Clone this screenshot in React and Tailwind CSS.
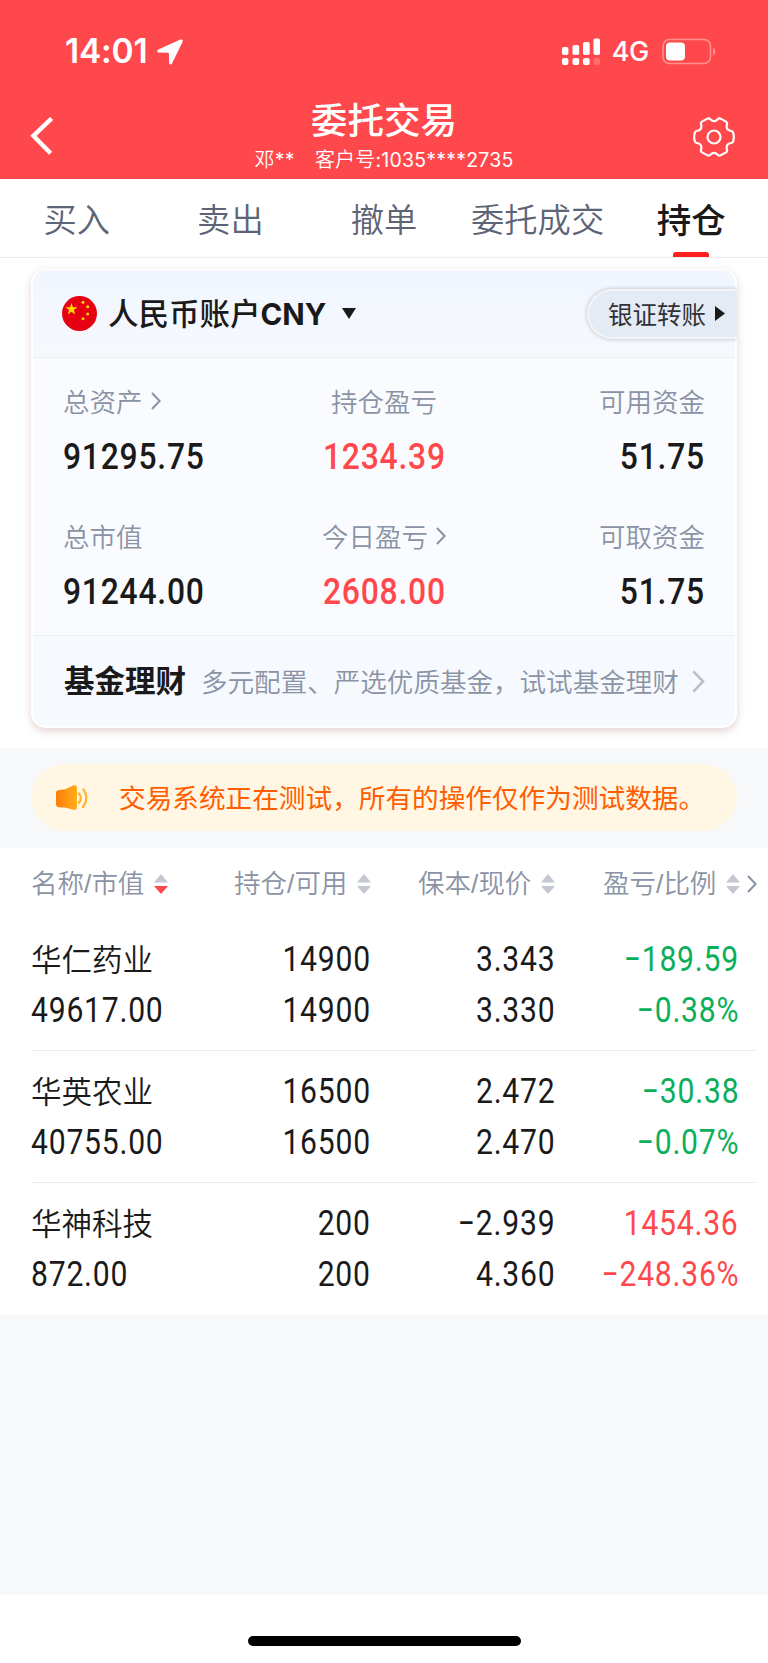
const CJK = "font-['Noto_Sans_CJK_SC',sans-serif]";

function Num({ children, className = "" }) {
  return (
    <span className={"inline-block whitespace-nowrap font-['Roboto',sans-serif] tracking-[0.9px] scale-x-[0.86] " + className}>
      {children}
    </span>
  );
}

function Chevron({ className = "", w = 2 }) {
  return (
    <svg viewBox="0 0 10 18" fill="none" stroke="currentColor" strokeWidth={w} className={className}>
      <path d="M1 1 L8.6 9 L1 17" />
    </svg>
  );
}

function StatusBar() {
  return (
    <div className="flex h-[103px] items-center pl-[65px] pr-[51px] text-white">
      <span className="w-[82px] whitespace-nowrap font-['Inter',sans-serif] text-[33.500px] font-semibold leading-none tracking-[-0.2px]">14:01</span>
      <svg viewBox="0 0 26 26" className="ml-[10px] h-[26px] w-[26px]" fill="currentColor">
        <path d="M23.4.6 1.3 10.6C-.4 11.5 0 13.5 1.8 13.6l9.4.1c.5 0 .7.2.7.7l.1 9.3c.1 2 2.200 2.300 3 .7L25.600 2.700C26.200 1 25 0 23.400.600Z" />
      </svg>
      <svg viewBox="0 0 38 27" className="ml-auto h-[27px] w-[38px]" fill="currentColor">
        <rect x="0" y="9" width="6.400" height="8" rx="1.800" />
        <rect x="10.500" y="7" width="6.700" height="10" rx="1.800" />
        <rect x="21" y="4" width="6.700" height="13" rx="1.800" />
        <rect x="31.500" y="0.500" width="6.500" height="16.500" rx="1.800" />
        <rect x="0" y="20" width="6.400" height="7" rx="2" />
        <rect x="10.500" y="20" width="6.700" height="7" rx="2" />
        <rect x="21" y="20" width="6.700" height="7" rx="2" />
        <rect x="31.500" y="20" width="6.500" height="7" rx="2" opacity="0.200" />
      </svg>
      <span className="ml-[12px] font-['Inter',sans-serif] text-[27px] font-medium leading-none tracking-[-0.3px]">4G</span>
      <svg viewBox="0 0 55 27" className="ml-[13px] h-[27px] w-[55px]">
        <rect x="1" y="1.500" width="47.500" height="24" rx="6.500" fill="none" stroke="#fff" strokeOpacity="0.400" strokeWidth="1.600" />
        <rect x="4" y="4.500" width="19" height="18" rx="4" fill="#fff" />
        <path d="M51 9.500c3 1.500 3 6.500 0 8Z" fill="#fff" opacity="0.400" />
      </svg>
    </div>
  );
}

function NavBar() {
  return (
    <div className="flex h-[76px] items-start justify-between pl-[30px] pr-[33px] text-white">
      <svg viewBox="0 0 24 38" className="mt-[14px] h-[38px] w-[24px]" fill="none" stroke="currentColor" strokeWidth="4.400">
        <path d="M21.600 1.500 3.400 18.800 20.600 36.200" />
      </svg>
      <div className="flex flex-col items-center pl-[21px]">
        <h1 className="-mt-[2px] h-[38px] text-[36.600px] font-medium leading-[36px]">委托交易</h1>
        <p className="mt-[7px] whitespace-pre text-[20px] font-[350] leading-[25px] tracking-[0.2px]">
          邓<span className="font-['Inter',sans-serif] text-[19.500px] font-normal">**</span>
          {"\u3000"}客户号<span className="font-['Inter',sans-serif] text-[19.500px] font-normal">:1035****2735</span>
        </p>
      </div>
      <svg viewBox="0 0 42 40" className="mt-[14px] h-[40px] w-[42px]" fill="none" stroke="currentColor" strokeWidth="2.200" strokeLinejoin="round">
        <path d="M14.500 1.600Q16 .8 17.300 2.200Q21 6.200 24.700 2.200Q26 .8 27.500 1.600L33 4.600Q34.500 5.500 34 7.200C32.800 11 34.500 13.700 38.200 14Q39.800 14.200 40.200 15.800Q41.500 20 40.200 24.200Q39.800 25.800 38.200 26C34.500 26.300 32.800 29 34 32.800Q34.500 34.500 33 35.400L27.500 38.400Q26 39.200 24.700 37.800Q21 33.800 17.300 37.800Q16 39.200 14.500 38.400L9 35.400Q7.500 34.500 8 32.800C9.200 29 7.500 26.300 3.800 26Q2.200 25.800 1.800 24.200Q.5 20 1.800 15.800Q2.200 14.200 3.800 14C7.500 13.700 9.200 11 8 7.200Q7.500 5.500 9 4.600Z" />
        <circle cx="21" cy="20" r="6.500" />
      </svg>
    </div>
  );
}

const tabs = ["买入", "卖出", "撤单", "委托成交", "持仓"];

function Tabs() {
  return (
    <nav className="grid h-[79px] grid-cols-5 border-b border-[#eceef0] bg-white">
      {tabs.map((t) => {
        const active = t === "持仓";
        return (
          <div key={t} className="flex flex-col items-center justify-between whitespace-nowrap">
            <span
              className={
                active
                  ? "mt-[15px] text-[34.500px] font-medium leading-[48px] text-[#1a1a1a]"
                  : "mt-[15px] text-[33.300px] font-[350] leading-[48px] text-[#5d6475]"
              }
            >
              {t}
            </span>
            {active && <i className="h-[5px] w-[36px] rounded-t-[3px] bg-[#ff1f1f]" />}
          </div>
        );
      })}
    </nav>
  );
}

function Stat({ label, value, arrow, align, red }) {
  const pos = align === "left" ? "items-start" : align === "right" ? "items-end" : "items-center";
  const origin = align === "left" ? "origin-left" : align === "right" ? "origin-right" : "origin-center";
  return (
    <div className={"flex flex-col " + pos}>
      <div className="flex items-center text-[26.500px] font-[350] leading-[40px] text-[#8a93a5]">
        {label}
        {arrow && <Chevron className="ml-[8px] h-[18px] w-[10px]" />}
      </div>
      <Num className={"mt-[11px] text-[37px] font-medium leading-[50px] " + origin + (red ? " text-[#ff484b]" : " text-[#1a1a1a]")}>
        {value}
      </Num>
    </div>
  );
}

function Flag() {
  return (
    <svg viewBox="0 0 35 35" className="h-[35px] w-[35px]">
      <circle cx="17.500" cy="17.500" r="17.500" fill="#e60012" />
      <g fill="#ffd800">
        <path d="M9.500 7l1.500 4.300h4.500l-3.600 2.700 1.300 4.400-3.700-2.600-3.700 2.600 1.300-4.400-3.600-2.700H8Z" />
        <circle cx="21" cy="6.200" r="1.500" />
        <circle cx="25.700" cy="10.700" r="1.500" />
        <circle cx="25.700" cy="18" r="1.500" />
        <circle cx="21" cy="22.700" r="1.500" />
      </g>
    </svg>
  );
}

function AccountCard() {
  return (
    <section className="mx-[31px] mt-[11px] h-[459px] overflow-hidden rounded-[15px] bg-[#fafbff] shadow-[0_3px_9px_rgba(130,50,50,0.22)]">
      <div className="flex h-[89px] items-center rounded-t-[15px] border-x-2 border-b border-t border-x-white border-b-[#ebeef3] border-t-white bg-linear-to-b from-[#f1f6ff] to-[#f6f8fd] pl-[29px]">
        <Flag />
        <span className="-mt-[2px] ml-[11px] text-[30.500px] font-medium leading-[44px] text-[#1a1a1a]">
          人民币账户<b className="font-['Inter',sans-serif] text-[29.500px] font-bold">CNY</b>
        </span>
        <svg viewBox="0 0 14 11" className="ml-[16px] h-[11px] w-[14px]" fill="#1a1a1a"><path d="M0 0h14L7 11Z" /></svg>
        <div className="-mr-[2px] ml-auto flex h-[50px] w-[150px] items-center rounded-l-full border-2 border-r-0 border-[#f2f5f9] bg-[#e5ebf4] pl-[19px] shadow-[0_0_4px_rgba(90,70,70,0.35)]">
          <span className="whitespace-nowrap text-[24.500px] font-normal leading-[36px] text-[#303238]">银证转账</span>
          <svg viewBox="0 0 10 15" className="ml-[9px] h-[15px] w-[10px] shrink-0" fill="#1a1a1a"><path d="M0 0 10 7.500 0 15Z" /></svg>
        </div>
      </div>
      <div className="flex h-[277px] flex-col border-x-2 border-white px-[30px] pt-[23px]">
        <div className="grid h-[135px] grid-cols-3">
          <Stat label="总资产" value="91295.75" arrow align="left" />
          <Stat label="持仓盈亏" value="1234.39" align="center" red />
          <Stat label="可用资金" value="51.75" align="right" />
        </div>
        <div className="grid grid-cols-3">
          <Stat label="总市值" value="91244.00" align="left" />
          <Stat label="今日盈亏" value="2608.00" arrow align="center" red />
          <Stat label="可取资金" value="51.75" align="right" />
        </div>
      </div>
      <div className="flex h-[93px] items-center whitespace-nowrap rounded-b-[15px] border-x-2 border-b-2 border-t border-x-white border-b-white border-t-[#edf1f6] bg-[#f6f9fe] pl-[31px]">
        <span className="-mt-[4px] text-[30.500px] font-bold leading-[44px] text-[#1a1a1a]">基金理财</span>
        <span className="ml-[15px] text-[26.550px] font-[350] leading-[40px] text-[#8a93a5]">多元配置、严选优质基金，试试基金理财</span>
        <Chevron className="ml-[13px] h-[23px] w-[13px] text-[#b9bec8]" />
      </div>
    </section>
  );
}

function Notice() {
  return (
    <div className="mt-[20px] h-[100px] bg-[#f6f8fa] px-[31px] pt-[16px]">
      <div className="flex h-[67px] items-center rounded-full bg-[#fff6e4] pl-[25px]">
        <svg viewBox="0 0 32 25" className="h-[25px] w-[32px]">
          <defs>
            <linearGradient id="horn" x1="0" x2="1">
              <stop offset="0" stopColor="#ff7d0a" />
              <stop offset="1" stopColor="#ffae1a" />
            </linearGradient>
          </defs>
          <path d="M3 5 9.500 4.300 17 .5Q21-.8 21 3.500V22Q21 25.500 17 24.700L10 22.700 3 22.200Q0 22 0 19V8Q0 5.300 3 5Z" fill="url(#horn)" />
          <path d="M22.800 8.500Q27 12.500 22.800 17.800M27.500 4.500Q33.500 13 27 22" fill="none" stroke="#ffb52e" strokeWidth="2.200" strokeLinecap="round" />
        </svg>
        <span className="-mt-[2px] ml-[31px] whitespace-nowrap text-[26.650px] font-normal leading-[40px] text-[#ff5e00]">
          交易系统正在测试，所有的操作仅作为测试数据。
        </span>
      </div>
    </div>
  );
}

function Sort({ down }) {
  return (
    <svg viewBox="0 0 14 20" className="ml-[10px] h-[20px] w-[14px] shrink-0">
      <path d="M7 0 14 8.500H0Z" fill="#c3c7cf" />
      <path d="M0 12H14L7 20Z" fill={down ? "#ff484b" : "#c3c7cf"} />
    </svg>
  );
}

function Heading({ a, b, down, className = "" }) {
  return (
    <div className={"flex items-center " + className}>
      <span className="-mt-[1px] leading-[40px]">
        {a}
        <span className="font-['Liberation_Sans',sans-serif]">/</span>
        {b}
      </span>
      <Sort down={down} />
    </div>
  );
}

const rows = [
  ["华仁药业", "49617.00", "14900", "14900", "3.343", "3.330", "-189.59", "-0.38%", "text-[#0aae5b]"],
  ["华英农业", "40755.00", "16500", "16500", "2.472", "2.470", "-30.38", "-0.07%", "text-[#0aae5b]"],
  ["华神科技", "872.00", "200", "200", "-2.939", "4.360", "1454.36", "-248.36%", "text-[#ff484b]"],
];

function Pair({ a, b, className = "" }) {
  return (
    <div className={"flex flex-col items-end pt-[1px] text-[35px] leading-[51px] " + className}>
      <Num className="origin-right">{a.replace("-", "−")}</Num>
      <Num className="origin-right">{b.replace("-", "−")}</Num>
    </div>
  );
}

function Holdings() {
  return (
    <section className="h-[466px] bg-white">
      <div className="flex h-[71px] items-center whitespace-nowrap pl-[31px] text-[26.500px] font-[350] text-[#8a93a5]">
        <Heading a="名称" b="市值" down className="w-[203px]" />
        <Heading a="持仓" b="可用" className="w-[184px]" />
        <Heading a="保本" b="现价" className="w-[185px]" />
        <Heading a="盈亏" b="比例" />
        <Chevron className="ml-[7px] h-[18px] w-[10px]" />
      </div>
      {rows.map((r, i) => (
        <div
          key={r[0]}
          className={"-mt-[1px] mb-[1px] ml-[31px] mr-[11px] h-[132px] pt-[14px] " + (i ? "border-t border-[#eceef1]" : "border-t border-transparent")}
        >
          <div className="grid grid-cols-[340px_184px_184px]">
            <div className="grid grid-cols-[145px_195px]">
              <div className="flex flex-col items-start text-[#1a1a1a]">
                <span className="whitespace-nowrap text-[30.500px] font-[350] leading-[51px]">{r[0]}</span>
                <Num className="mt-[1px] origin-left text-[35px] leading-[51px]">{r[1]}</Num>
              </div>
              <Pair a={r[2]} b={r[3]} className="text-[#1a1a1a]" />
            </div>
            <Pair a={r[4]} b={r[5]} className="text-[#1a1a1a]" />
            <Pair a={r[6]} b={r[7]} className={r[8]} />
          </div>
        </div>
      ))}
    </section>
  );
}

export default function App() {
  return (
    <main className={"flex h-[1663px] w-[768px] flex-col overflow-hidden bg-white " + CJK}>
      <header className="h-[179px] shrink-0 bg-[#ff484b]">
        <StatusBar />
        <NavBar />
      </header>
      <Tabs />
      <AccountCard />
      <Notice />
      <Holdings />
      <div className="h-[281px] bg-[#f6f8fa]" />
      <footer className="flex flex-1 justify-center bg-white pt-[41px]">
        <div className="h-[10px] w-[273px] rounded-full bg-black" />
      </footer>
    </main>
  );
}
